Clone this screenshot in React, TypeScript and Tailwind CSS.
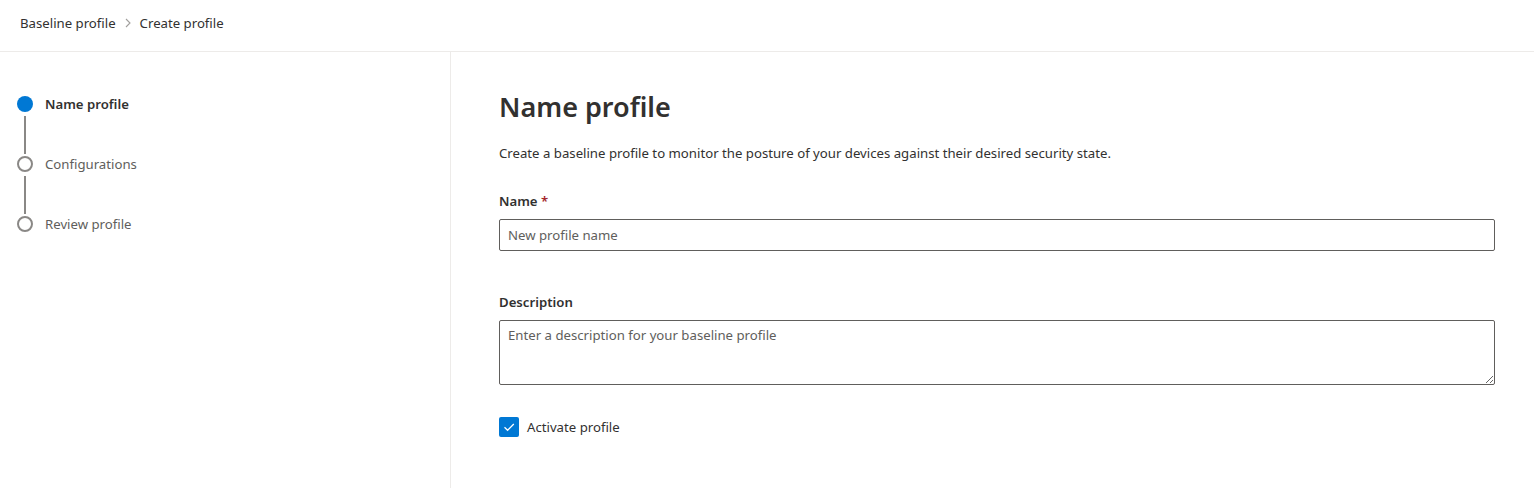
import React from "react";

const font = { fontFamily: '"Segoe UI", "Noto Sans", sans-serif' };

function Step({ label, active, last }: { label: string; active?: boolean; last?: boolean }) {
  return (
    <div className="flex">
      <div className="flex w-[16px] flex-col items-center">
        {active ? (
          <div className="mt-[2px] h-[16px] w-[16px] rounded-full bg-[#0078d4]" />
        ) : (
          <div className="mt-[2px] h-[16px] w-[16px] rounded-full border-2 border-[#8a8886] bg-white" />
        )}
        {!last && <div className="mt-[4px] h-[38px] w-[2px] bg-[#8a8886]" />}
      </div>
      <div
        className={`ml-[12px] text-[13.2px] leading-[20px] ${active ? "font-semibold text-[#323130]" : "text-[#605e5c]"}`}
      >
        {label}
      </div>
    </div>
  );
}

export default function App() {
  return (
    <div className="h-[488px] w-[1534px] overflow-hidden bg-white text-[#323130]" style={font}>
      <div className="flex h-[52px] items-start border-b border-[#edebe9] pl-[20px] pt-[13px] text-[13.2px] leading-[20px]">
        <span className="text-[#323130]">Baseline profile</span>
        <svg className="ml-[6px] mr-[6px] mt-[4px]" width="12" height="12" viewBox="0 0 12 12">
          <path d="M4 2 L8 6 L4 10" fill="none" stroke="#a19f9d" strokeWidth="1.1" />
        </svg>
        <span className="text-[#323130]">Create profile</span>
      </div>
      <div className="flex h-[436px]">
        <div className="w-[451px] shrink-0 border-r border-[#edebe9] pl-[17px] pt-[42px]">
          <Step label="Name profile" active />
          <Step label="Configurations" />
          <Step label="Review profile" last />
        </div>
        <div className="flex-1 pl-[48px] pr-[39px] pt-[37px]">
          <h1 className="text-[27px] font-semibold leading-[36px] text-[#323130]">Name profile</h1>
          <p className="mt-[18px] text-[13.2px] leading-[20px] text-[#323130]">
            Create a baseline profile to monitor the posture of your devices against their desired security state.
          </p>
          <div className="mt-[28px] text-[13.2px] font-semibold leading-[20px]">
            Name <span className="text-[#a4262c]">*</span>
          </div>
          <input
            className="mt-[8px] block h-[32px] w-full rounded-[2px] border border-[#605e5c] px-[8px] text-[13.2px] text-[#323130] outline-none placeholder:text-[#605e5c]"
            placeholder="New profile name"
            style={font}
          />
          <div className="mt-[41px] text-[13.2px] font-semibold leading-[20px]">Description</div>
          <textarea
            className="mt-[8px] block h-[65px] w-full rounded-[2px] border border-[#605e5c] px-[8px] py-[5px] text-[13.2px] text-[#323130] outline-none placeholder:text-[#605e5c]"
            placeholder="Enter a description for your baseline profile"
            style={font}
          />
          <div className="mt-[32px] flex items-center">
            <div className="flex h-[20px] w-[20px] items-center justify-center rounded-[2px] bg-[#0078d4]">
              <svg width="14" height="14" viewBox="0 0 14 14">
                <path d="M2.5 7.2 L5.6 10.3 L11.8 4" fill="none" stroke="white" strokeWidth="1.3" />
              </svg>
            </div>
            <span className="ml-[8px] text-[13.2px] leading-[20px]">Activate profile</span>
          </div>
        </div>
      </div>
    </div>
  );
}
